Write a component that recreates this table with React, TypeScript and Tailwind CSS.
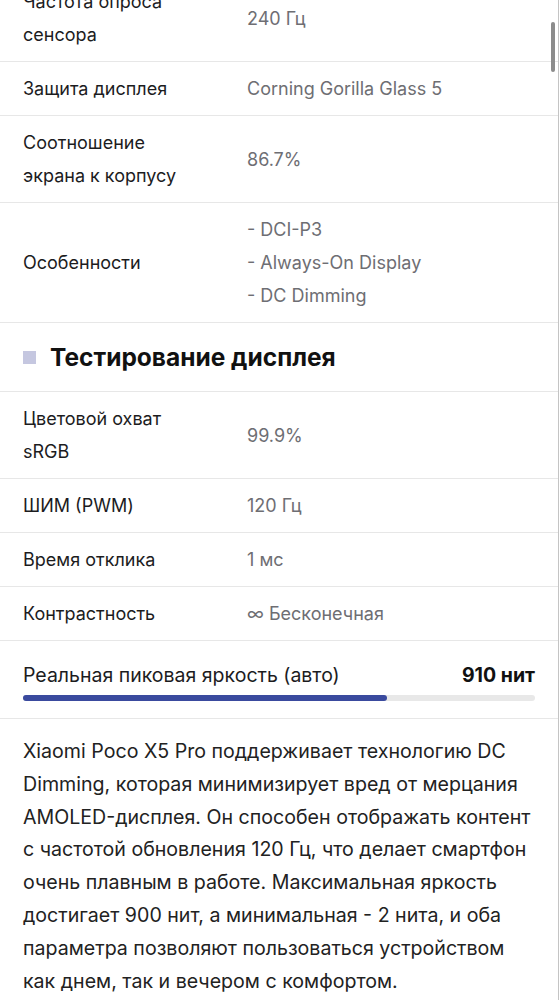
const specsTop = [
  { label: ['Частота опроса', 'сенсора'], value: ['240 Гц'] },
  { label: ['Защита дисплея'], value: ['Corning Gorilla Glass 5'] },
  { label: ['Соотношение', 'экрана к корпусу'], value: ['86.7%'] },
  { label: ['Особенности'], value: ['- DCI-P3', '- Always-On Display', '- DC Dimming'] },
]

const specsTest = [
  { label: ['Цветовой охват', 'sRGB'], value: ['99.9%'] },
  { label: ['ШИМ (PWM)'], value: ['120 Гц'] },
  { label: ['Время отклика'], value: ['1 мс'] },
  { label: ['Контрастность'], value: ['∞ Бесконечная'] },
]

type Spec = { label: string[]; value: string[] }

function SpecRow({ spec }: { spec: Spec }) {
  return (
    <div className="grid grid-cols-[224px_1fr] items-center border-b border-[#e7e7e7] py-[10px] pl-[23px] pr-[23px] text-[18px] leading-[33px]">
      <div className="text-[#1c1c1e]">
        {spec.label.map((l) => (
          <div key={l}>{l}</div>
        ))}
      </div>
      <div className="text-[#6e6e73]">
        {spec.value.map((v) => (
          <div key={v}>{v}</div>
        ))}
      </div>
    </div>
  )
}

export default function App() {
  const peak = 910
  const maxPeak = 1280

  return (
    <div
      className="relative h-[1000px] w-full overflow-hidden bg-white"
      style={{ fontFamily: 'Inter, "Liberation Sans", sans-serif' }}
    >
      <div className="-mt-[25px] border-r border-[#c4c4c4]">
        {specsTop.map((s) => (
          <SpecRow key={s.label[0]} spec={s} />
        ))}

        <div className="flex items-center gap-[14px] border-b border-[#e7e7e7] py-[18px] pl-[23px] leading-[32px]">
          <span className="h-[13px] w-[13px] bg-[#c5c7e0]" />
          <h2 className="text-[24.5px] font-bold text-[#111]">Тестирование дисплея</h2>
        </div>

        {specsTest.map((s) => (
          <SpecRow key={s.label[0]} spec={s} />
        ))}

        <div className="border-b border-[#e7e7e7] px-[23px] pt-[18px] pb-[17px] text-[19.5px]">
          <div className="flex items-center justify-between leading-[33px]">
            <span className="text-[#1c1c1e]">Реальная пиковая яркость (авто)</span>
            <span className="font-bold text-[#111]">{peak} нит</span>
          </div>
          <div className="mt-[3px] h-[6px] w-full rounded-full bg-[#e8e8e8]">
            <div
              className="h-full rounded-full bg-[#3a4a9e]"
              style={{ width: `${(peak / maxPeak) * 100}%` }}
            />
          </div>
        </div>

        <p className="pl-[23px] pr-[26px] pt-[16px] pb-[40px] text-[19.6px] leading-[32.8px] text-[#222]">
          Xiaomi Poco X5 Pro поддерживает технологию DC Dimming, которая минимизирует вред от
          мерцания AMOLED-дисплея. Он способен отображать контент с частотой обновления 120 Гц,
          что делает смартфон очень плавным в работе. Максимальная яркость достигает 900 нит, а
          минимальная - 2 нита, и оба параметра позволяют пользоваться устройством как днем, так
          и вечером с комфортом.
        </p>
      </div>

      {/* scroll indicator */}
      <div className="absolute right-[4px] top-[22px] h-[50px] w-[4px] rounded-full bg-[#8c8c8c]" />
    </div>
  )
}
